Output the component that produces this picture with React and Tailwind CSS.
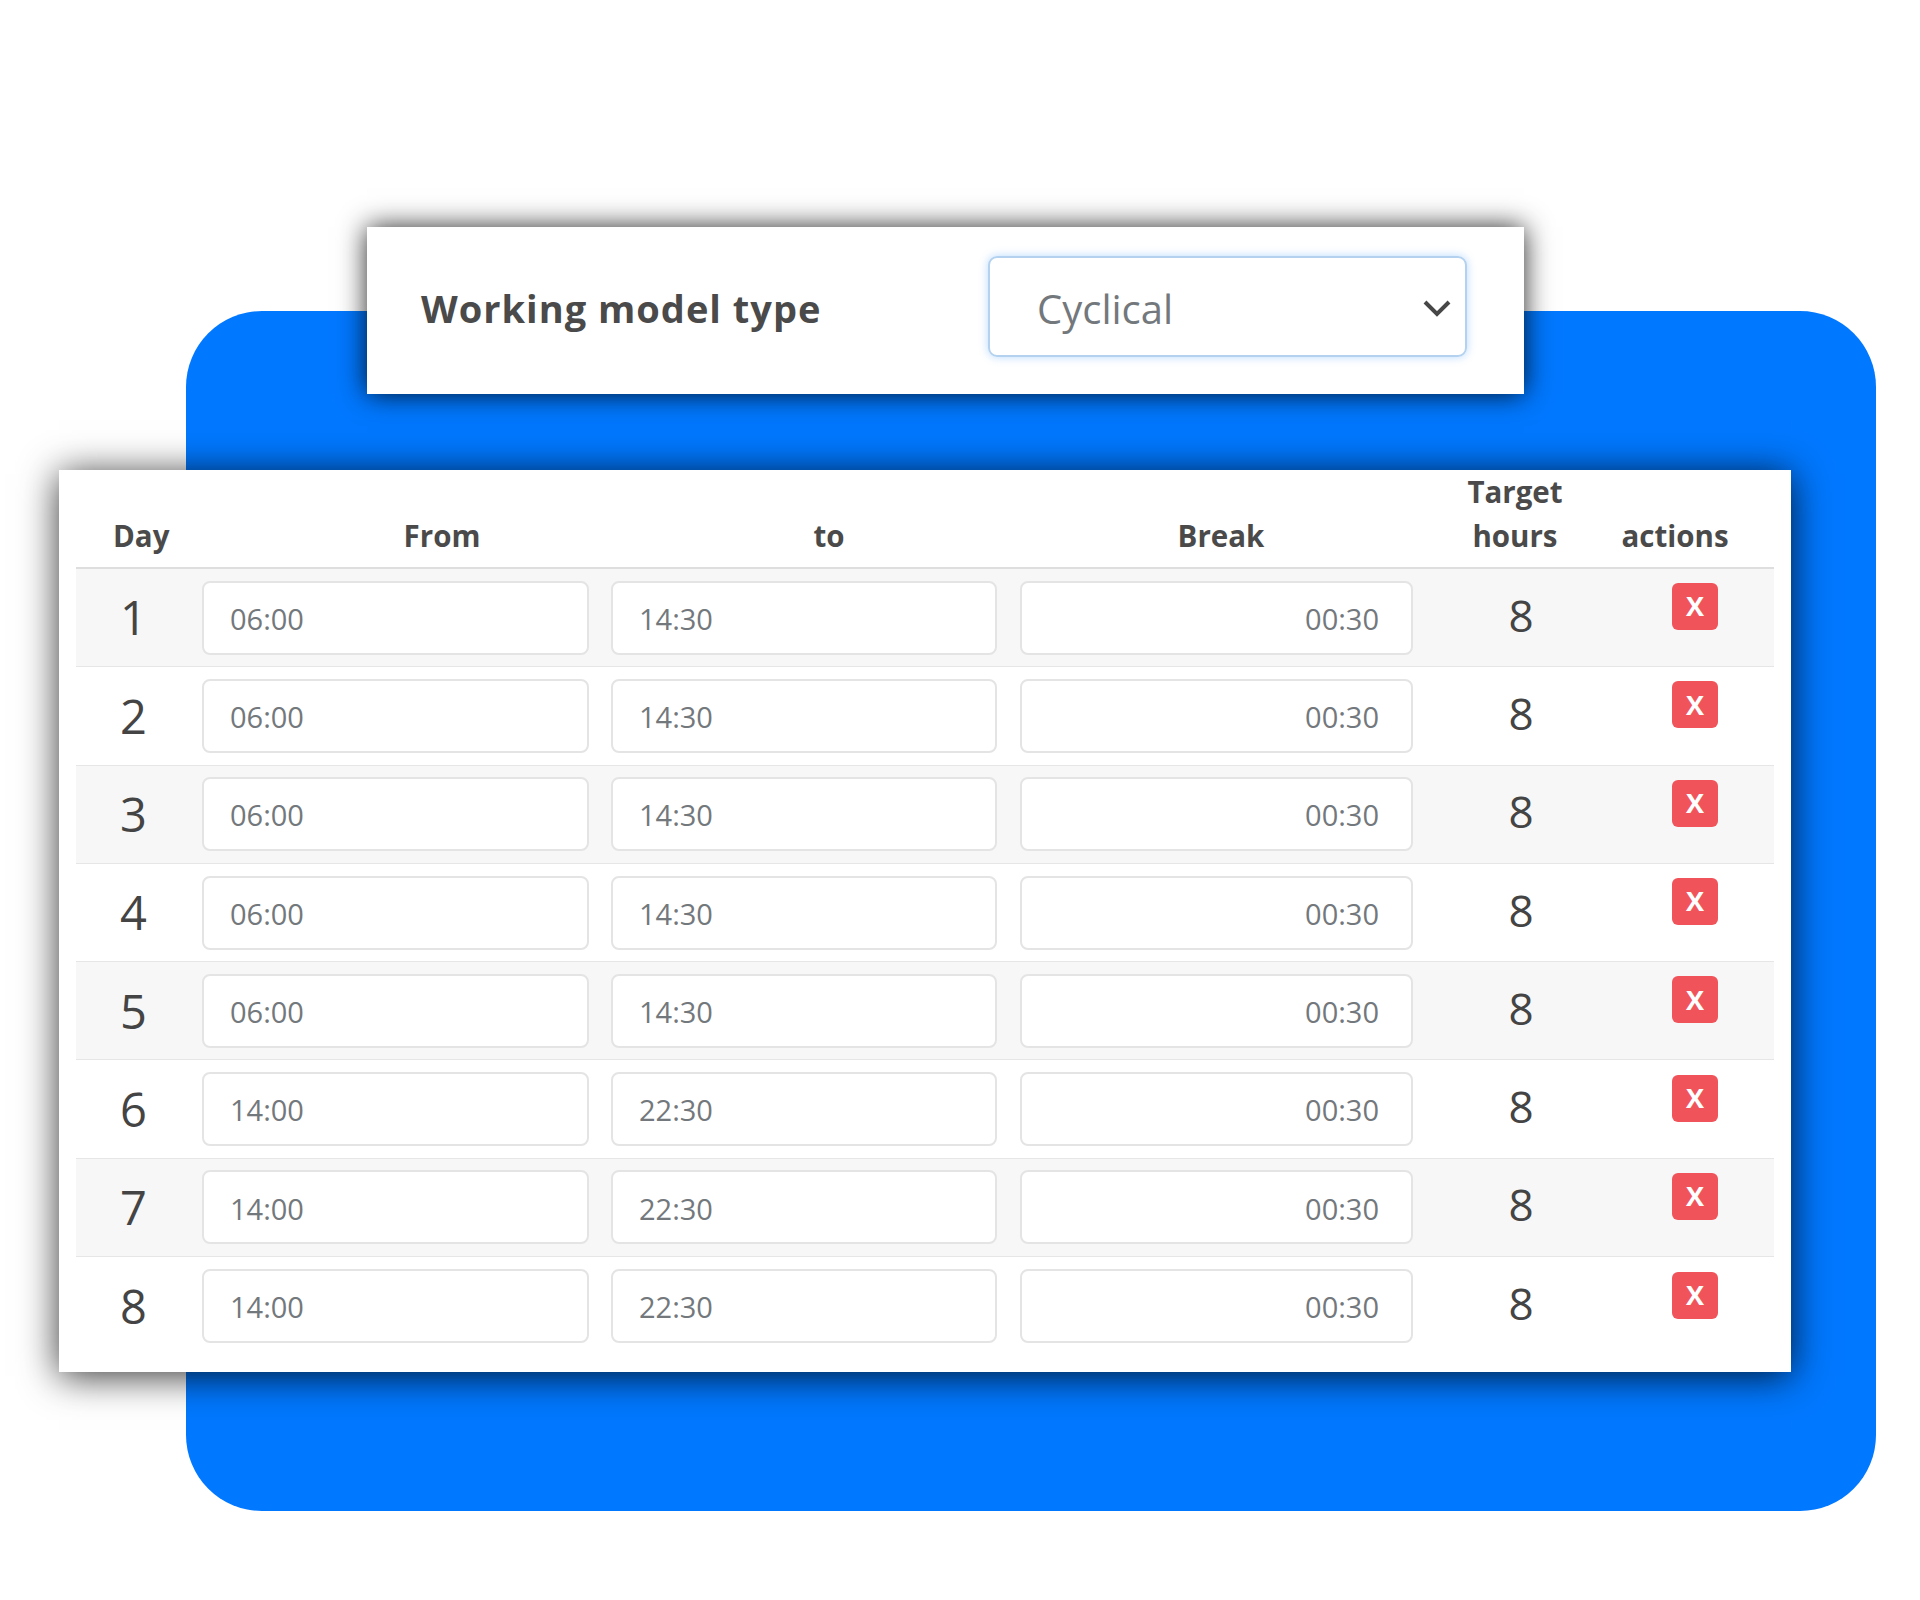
const rows = [
  { day: 1, from: "06:00", to: "14:30" },
  { day: 2, from: "06:00", to: "14:30" },
  { day: 3, from: "06:00", to: "14:30" },
  { day: 4, from: "06:00", to: "14:30" },
  { day: 5, from: "06:00", to: "14:30" },
  { day: 6, from: "14:00", to: "22:30" },
  { day: 7, from: "14:00", to: "22:30" },
  { day: 8, from: "14:00", to: "22:30" },
];

export default function App() {
  return (
    <div className="h-[1600px] overflow-hidden bg-white pt-[311px] pl-[186px] font-['Open_Sans',sans-serif]">
      <div className="h-[1200px] w-[1690px] rounded-[76px] bg-[#0078ff]">
        <div className="relative z-10 ml-[181px] flex h-[167px] w-[1157px] -translate-y-[84px] items-center justify-between bg-white pr-[57px] pl-[54px] shadow-[0_0_26px_rgba(0,0,0,0.85)]">
          <div className="pb-[5px] text-[38px] font-bold tracking-[1px] text-[#4a4a4a]">Working model type</div>
          <div className="mb-[9px] flex h-[101px] w-[479px] items-center justify-between rounded-[9px] border-2 border-[#b4d2f0] pr-[13px] pl-[47px] shadow-[0_0_10px_rgba(0,123,255,0.28)]">
            <span className="pt-[5px] text-[40px] text-[#73787c]">Cyclical</span>
            <svg className="mt-[3px]" width="30" height="20" viewBox="0 0 30 20" fill="none" stroke="#474747" strokeWidth="4">
              <path d="M3 4l12 12L27 4" />
            </svg>
          </div>
        </div>
        <div className="relative -ml-[127px] -mt-[8px] h-[902px] w-[1732px] bg-white px-[17px] shadow-[0_4px_36px_rgba(0,0,0,0.8)]">
          <div className="flex h-[99px] items-end border-b-2 border-[#dedede] pb-[9px] text-center text-[29.5px] leading-[44px] font-bold text-[#4a4a4a]">
            <div className="w-[168px] pl-[37px] text-left">Day</div>
            <div className="w-[396px]">From</div>
            <div className="w-[378px]">to</div>
            <div className="w-[406px]">Break</div>
            <div className="w-[182px]">Target<br />hours</div>
            <div className="w-[138px]">actions</div>
          </div>
          {rows.map((r) => (
            <div key={r.day} className={`flex h-[98.3px] items-center border-b border-[#e6e6e6] last:border-b-0 ${r.day % 2 ? "bg-[#f7f7f7]" : "bg-white"}`}>
              <div className="w-[126px] pr-[11px] text-center text-[47px] text-[#444]">{r.day}</div>
              <Field value={r.from} className="w-[387px] pl-[26px]" />
              <Field value={r.to} className="ml-[22px] w-[386px] pl-[26px]" />
              <Field value={r.tail} className="ml-[23px] w-[393px] justify-end" />
              <div className="w-[216px] pb-[6px] text-center text-[44px] text-[#444]">8</div>
              <div className="pl-[43px]">
                <div className="mb-[22px] flex h-[47px] w-[46px] items-center justify-center rounded-[6px] bg-[#f0545a] text-[27px] font-bold text-white">X</div>
              </div>
            </div>
          ))}
        </div>
      </div>
    </div>
  );
}

function Field({ value = "00:30", className }) {
  return (
    <div className={`flex h-[74px] items-center rounded-[8px] border-2 border-[#e4e4e4] bg-white pr-[32px] pt-[2px] text-[29px] text-[#73787c] ${className}`}>
      {value}
    </div>
  );
}
